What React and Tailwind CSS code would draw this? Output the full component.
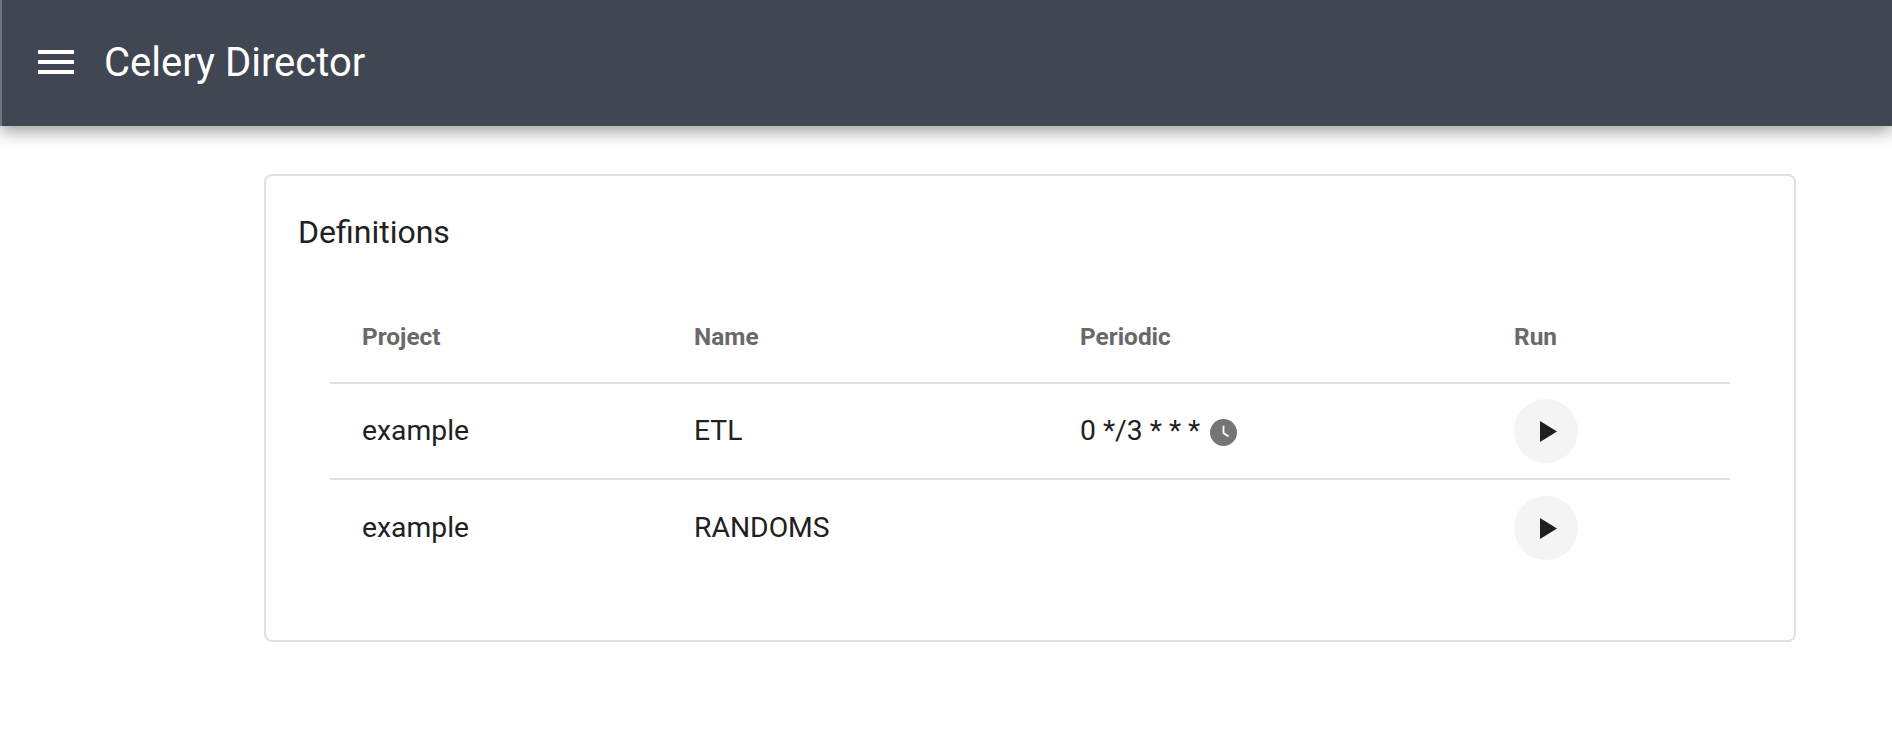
import React from 'react';

const rows = [
  { project: 'example', name: 'ETL', periodic: '0 */3 * * *' },
  { project: 'example', name: 'RANDOMS', periodic: '' },
];

const PlayButton = () => (
  <button className="flex h-[64px] w-[64px] items-center justify-center rounded-full bg-[#f4f4f4]">
    <svg width="17" height="21" viewBox="0 0 17 21" className="ml-[5px]">
      <path d="M0 0L17 10.5L0 21Z" fill="#1f1f1f" />
    </svg>
  </button>
);

const ClockIcon = () => (
  <svg width="27" height="27" viewBox="0 0 24 24" className="ml-[10px] mt-[2px]">
    <circle cx="12" cy="12" r="12" fill="#757575" />
    <path d="M12 6v6.5l4.5 3" fill="none" stroke="#fff" strokeWidth="1.6" />
  </svg>
);

const App = () => {
  return (
    <div className="h-[736px] bg-white font-['Roboto',sans-serif] text-[#212121]">
      {/* Header */}
      <div className="flex h-[126px] items-center border-l-2 border-[#6f747d] bg-[#404752] pl-[36px] shadow-[0_5px_16px_rgba(0,0,0,0.4)]">
        <svg width="36" height="24" viewBox="0 0 36 24" fill="#fff" className="mb-[2px]">
          <rect y="0" width="36" height="4" />
          <rect y="10" width="36" height="4" />
          <rect y="20" width="36" height="4" />
        </svg>
        <span className="ml-[30px] text-[40px] text-white">Celery Director</span>
      </div>

      {/* Definitions card */}
      <div className="ml-[264px] mt-[48px] h-[468px] w-[1532px] rounded-[8px] border-2 border-[#e0e0e0] pl-[32px] pr-[64px] pt-[31px]">
        <h2 className="text-[32px] leading-[50px]">Definitions</h2>
        <div className="ml-[32px] mt-[35px]">
          <div className="flex h-[92px] items-center border-b-2 border-[#e0e0e0] pl-[32px] text-[24.4px] font-bold text-[#696969]">
            <span className="w-[332px]">Project</span>
            <span className="w-[386px]">Name</span>
            <span className="w-[434px]">Periodic</span>
            <span>Run</span>
          </div>
          {rows.map((row, i) => (
            <div
              key={row.name}
              className={`flex h-[96px] items-center pl-[32px] text-[28.3px] ${i === 0 ? 'border-b-2 border-[#e0e0e0]' : ''}`}
            >
              <span className="w-[332px] pt-[1px]">{row.project}</span>
              <span className="w-[386px] pt-[1px]">{row.name}</span>
              <span className="flex w-[434px] items-center pt-[1px]">
                {row.periodic}
                {row.periodic && <ClockIcon />}
              </span>
              <PlayButton />
            </div>
          ))}
        </div>
      </div>
    </div>
  );
};

export default App;
